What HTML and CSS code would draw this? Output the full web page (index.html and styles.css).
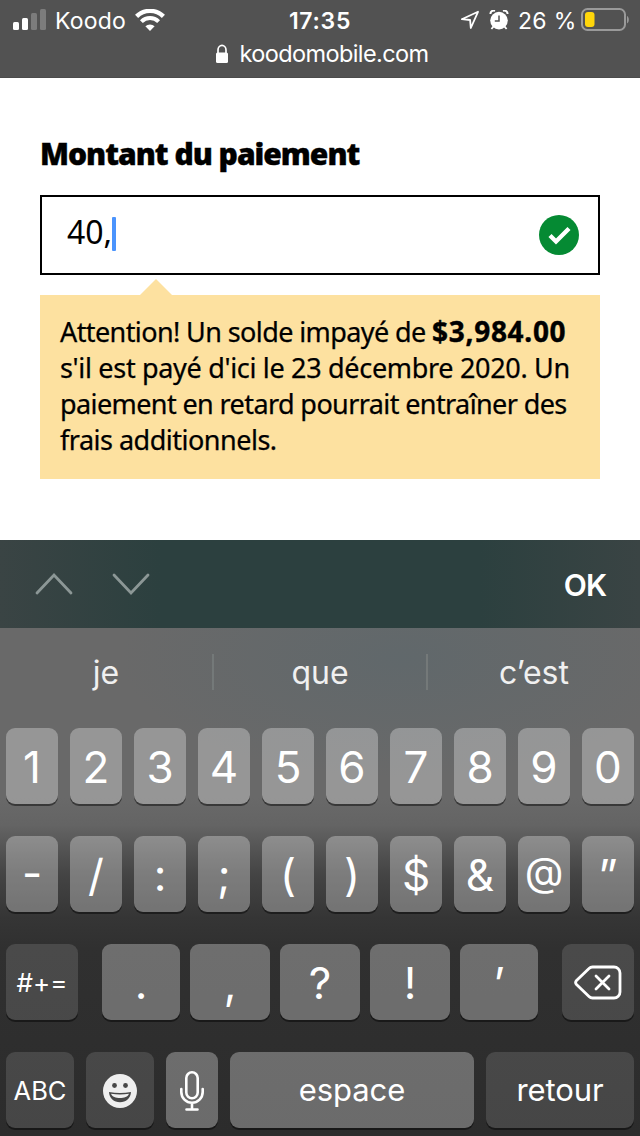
FILE: index.html
```html
<!DOCTYPE html>
<html lang="fr-CA">
<head>
    <meta charset="UTF-8">
    <meta name="viewport" content="width=device-width, initial-scale=1.0">
    <title>Montant du paiement</title>
    <link rel="stylesheet" href="styles.css">
</head>
<body>
    <header class="browser-bar">
        <div class="status">
            <div class="status-left">
                <svg class="signal" width="34" height="22" viewBox="0 0 34 22">
                    <rect x="0" y="13" width="6" height="8" rx="1.5" fill="#fff"/>
                    <rect x="9" y="9" width="6" height="12" rx="1.5" fill="#fff"/>
                    <rect x="18" y="4" width="6" height="17" rx="1.5" fill="#7c7c7c"/>
                    <rect x="27" y="0" width="6" height="21" rx="1.5" fill="#7c7c7c"/>
                </svg>
                <span class="carrier">Koodo</span>
                <svg class="wifi" width="30" height="22" viewBox="0 0 30 22">
                    <path d="M1.6 7.4a19 19 0 0 1 26.8 0" fill="none" stroke="#fff" stroke-width="4.4"/>
                    <path d="M6.4 12.6a12.2 12.2 0 0 1 17.2 0" fill="none" stroke="#fff" stroke-width="4"/>
                    <path d="M15 22l-4.6-4.8a6.8 6.8 0 0 1 9.2 0z" fill="#fff"/>
                </svg>
            </div>
            <div class="clock">17:35</div>
            <div class="status-right">
                <svg width="20" height="20" viewBox="0 0 20 20">
                    <path d="M1.8 9.2L18 1.8 10.8 18l-.7-8z" fill="none" stroke="#fff" stroke-width="1.8" stroke-linejoin="round"/>
                </svg>
                <svg class="alarm" width="20" height="20" viewBox="0 0 20 20">
                    <circle cx="10" cy="10.6" r="8.8" fill="#fff"/>
                    <path d="M1.5 4a3 3 0 0 1 4.4-3M18.5 4a3 3 0 0 0-4.4-3" fill="none" stroke="#fff" stroke-width="2"/>
                    <path d="M4.4 16.6l-2 2.4M15.6 16.6l2 2.4" stroke="#fff" stroke-width="1.8"/>
                    <path d="M10 5.6v5.4H5.8" fill="none" stroke="#525252" stroke-width="1.5"/>
                </svg>
                <span class="percent">26 %</span>
                <svg class="battery" width="50" height="24" viewBox="0 0 50 24">
                    <rect x="1" y="1" width="43" height="21" rx="5.5" fill="none" stroke="#9a9a9a" stroke-width="2"/>
                    <rect x="4" y="4" width="9.5" height="15" rx="3" fill="#ffd60a"/>
                    <path d="M46 8c2.4 1 2.4 6.4 0 7.4z" fill="#9a9a9a"/>
                </svg>
            </div>
        </div>
        <div class="address">
            <svg width="14" height="20" viewBox="0 0 14 20">
                <rect x="1" y="8.5" width="12" height="10.5" rx="1.5" fill="#fff"/>
                <path d="M3 9V6a4 4.6 0 0 1 8 0v3" fill="none" stroke="#fff" stroke-width="1.7"/>
            </svg>
            <span>koodomobile.com</span>
        </div>
    </header>

    <main class="payment">
        <h1>Montant du paiement</h1>
        <div class="amount">
            <span class="amount-value">40,</span><span class="caret"></span>
            <svg class="valid" width="40" height="40" viewBox="0 0 40 40">
                <circle cx="20" cy="20" r="20" fill="#058a33"/>
                <path d="M11 20.5l6 6 13-13" fill="none" stroke="#fff" stroke-width="4.4"/>
            </svg>
        </div>
        <div class="notice">
            <p class="line-1">Attention! Un solde impayé de <strong>$3,984.00</strong></p>
            <p class="line-2">s'il est payé d'ici le 23 décembre 2020. Un</p>
            <p class="line-3">paiement en retard pourrait entraîner des</p>
            <p class="line-4">frais additionnels.</p>
        </div>
    </main>

    <nav class="accessory">
        <svg width="38" height="24" viewBox="0 0 38 24">
            <path d="M2 21L19 3l17 18" fill="none" stroke="#8c9796" stroke-width="2.8" stroke-linecap="round"/>
        </svg>
        <svg width="38" height="24" viewBox="0 0 38 24">
            <path d="M2 3l17 18L36 3" fill="none" stroke="#8c9796" stroke-width="2.8" stroke-linecap="round"/>
        </svg>
        <span class="ok">OK</span>
    </nav>

    <section class="keyboard">
        <div class="suggestions">
            <span>je</span>
            <span>que</span>
            <span>c’est</span>
        </div>
        <div class="row ten">
            <div class="key">1</div>
            <div class="key">2</div>
            <div class="key">3</div>
            <div class="key">4</div>
            <div class="key">5</div>
            <div class="key">6</div>
            <div class="key">7</div>
            <div class="key">8</div>
            <div class="key">9</div>
            <div class="key">0</div>
        </div>
        <div class="row ten">
            <div class="key raised">-</div>
            <div class="key">/</div>
            <div class="key">:</div>
            <div class="key">;</div>
            <div class="key">(</div>
            <div class="key">)</div>
            <div class="key">$</div>
            <div class="key">&amp;</div>
            <div class="key at">@</div>
            <div class="key">”</div>
        </div>
        <div class="row punctuation">
            <div class="key dark symbols">#+=</div>
            <div class="key">.</div>
            <div class="key">,</div>
            <div class="key">?</div>
            <div class="key">!</div>
            <div class="key">’</div>
            <div class="key dark">
                <svg width="48" height="36" viewBox="0 0 48 36">
                    <path d="M19 2h21a6 6 0 0 1 6 6v19a6 6 0 0 1-6 6H19a5 5 0 0 1-4-1.5L2.5 19.5a3 3 0 0 1 0-4L15 3.5A5 5 0 0 1 19 2z" fill="none" stroke="#fff" stroke-width="2.8" stroke-linejoin="round"/>
                    <path d="M22 11l13 13M35 11L22 24" stroke="#fff" stroke-width="2.8" stroke-linecap="round"/>
                </svg>
            </div>
        </div>
        <div class="row bottom">
            <div class="key dark abc">ABC</div>
            <div class="key dark">
                <svg width="34" height="34" viewBox="0 0 34 34">
                    <circle cx="17" cy="17" r="17" fill="#efefef"/>
                    <circle cx="11.5" cy="11.5" r="2.4" fill="#474747"/>
                    <circle cx="22.5" cy="11.5" r="2.4" fill="#474747"/>
                    <path d="M6 18c7 1.3 15 1.3 22 0-.3 6.5-5 10.3-11 10.3S6.3 24.5 6 18z" fill="#474747"/>
                    <path d="M8 19.7c6 1 12 1 18 0-1 3.2-5 4.3-9 4.3s-8-1.1-9-4.3z" fill="#efefef"/>
                </svg>
            </div>
            <div class="key">
                <svg width="26" height="42" viewBox="0 0 26 42">
                    <rect x="7.3" y="2.3" width="11.4" height="26" rx="5.7" fill="none" stroke="#fff" stroke-width="2.6"/>
                    <path d="M2.3 19v3a10.7 10.7 0 0 0 21.4 0v-3M13 33v6M7.5 39.5h11" fill="none" stroke="#fff" stroke-width="2.6" stroke-linecap="round"/>
                </svg>
            </div>
            <div class="key word">espace</div>
            <div class="key dark word">retour</div>
        </div>
    </section>
</body>
</html>
```
FILE: styles.css
```css
* {
    box-sizing: border-box;
    margin: 0;
    padding: 0;
}

body {
    width: 640px;
    height: 1136px;
    overflow: hidden;
    background: #fff;
    font-family: Inter, "Liberation Sans", sans-serif;
    color: #fff;
}

svg {
    display: block;
    flex: none;
}

/* Status bar and address */
.browser-bar {
    height: 78px;
    background: #525252;
    border-bottom: 1px solid #4b4b4b;
}

.status {
    height: 40px;
    display: grid;
    grid-template-columns: 1fr auto 1fr;
    align-items: center;
    font-size: 23px;
    line-height: 28px;
}

.status-left,
.status-right {
    display: flex;
    align-items: center;
}

.status-left {
    padding-left: 13px;
}

.carrier {
    margin-left: 8px;
    width: 72px;
    padding-top: 2px;
    letter-spacing: 0.2px;
}

.wifi {
    margin-left: 8px;
}

.clock {
    padding-top: 2px;
    font-weight: 600;
    letter-spacing: 0.7px;
}

.status-right {
    justify-content: flex-end;
    padding-right: 9px;
}

.alarm {
    margin-left: 9px;
}

.percent {
    margin-left: 9px;
    width: 58px;
    padding-top: 2px;
    letter-spacing: 0.3px;
    white-space: nowrap;
}

.battery {
    margin-left: 5px;
}

.address {
    display: flex;
    justify-content: center;
    align-items: center;
    gap: 10px;
    height: 27px;
    padding-left: 4px;
    font-size: 23.5px;
    letter-spacing: -0.6px;
}

/* Payment form */
.payment {
    height: 462px;
    padding: 57px 40px 0;
    color: #000;
    font-family: "Noto Sans", sans-serif;
}

h1 {
    height: 60px;
    font-size: 30px;
    line-height: 38px;
    font-weight: 900;
    letter-spacing: -1px;
    white-space: nowrap;
    -webkit-text-stroke: 0.4px #000;
}

.amount {
    display: flex;
    align-items: center;
    height: 80px;
    padding: 0 19px 0 25px;
    border: 2px solid #000;
}

.amount-value {
    font-size: 32px;
    line-height: 40px;
    padding-bottom: 6px;
    letter-spacing: -0.1px;
}

.caret {
    width: 4px;
    height: 34px;
    margin-bottom: 3px;
    border-radius: 1px;
    background: #4b94fd;
}

.valid {
    margin-left: auto;
}

.notice {
    position: relative;
    height: 184px;
    margin-top: 20px;
    padding: 18px 20px;
    background: #fde1a0;
    font-size: 27px;
    line-height: 36px;
    white-space: nowrap;
    -webkit-text-stroke: 0.25px #000;
}

.notice::before {
    content: "";
    position: absolute;
    left: 100px;
    top: -16px;
    border: 16px solid transparent;
    border-top: 0;
    border-bottom-color: #fde1a0;
}

.line-1,
.line-3 {
    letter-spacing: -0.6px;
}

.line-1 strong {
    font-size: 28px;
    font-weight: 700;
    letter-spacing: 0.7px;
    -webkit-text-stroke: 0.4px #000;
}

.line-2 {
    letter-spacing: -0.32px;
}

.line-4 {
    letter-spacing: -0.5px;
}

/* Form navigation above the keyboard */
.accessory {
    display: flex;
    align-items: center;
    gap: 39px;
    height: 88px;
    padding: 0 34px 0 35px;
    background: linear-gradient(90deg, #3a4444, #2c403f 25%, #2c403f 75%, #3a4444);
}

.ok {
    margin-left: auto;
    padding-top: 2px;
    font-size: 30px;
    font-weight: 600;
    letter-spacing: -1px;
}

/* Keyboard */
.keyboard {
    height: 508px;
    background:
        radial-gradient(ellipse 280px 120px at 400px 30px, rgba(88, 103, 109, 0.5), rgba(88, 103, 109, 0)),
        linear-gradient(#696969 170px, #646464 197px, #505050 227px, #444 247px, #353535 290px, #303030 320px, #2c2c2c);
}

.suggestions {
    display: grid;
    grid-template-columns: 212px 214px 214px;
    height: 100px;
    padding-top: 26px;
    font-size: 32px;
    line-height: 38px;
    text-align: center;
    color: #f0f0f0;
}

.suggestions span {
    height: 36px;
}

.suggestions span + span {
    border-left: 2px solid #747979;
}

.row {
    display: grid;
    grid-template-rows: 76px;
    gap: 12px;
    height: 76px;
    margin: 0 6px 32px;
}

.ten {
    grid-template-columns: repeat(10, 52px);
}

.punctuation {
    grid-template-columns: 86px 78px 80px 80px 80px 78px 86px;
    gap: 10px;
}

.punctuation .key:first-child {
    margin-right: 14px;
}

.punctuation .key:last-child {
    margin-left: 14px;
}

.bottom {
    grid-template-columns: 68px 68px 52px 244px 148px;
    margin-bottom: 0;
}

.key {
    display: flex;
    justify-content: center;
    align-items: center;
    padding-top: 2px;
    border-radius: 9px;
    background: rgba(255, 255, 255, 0.3);
    box-shadow: 0 2px 0 rgba(0, 0, 0, 0.45);
    font-size: 44px;
    line-height: 1;
}

.dark {
    background: rgba(255, 255, 255, 0.125);
}

.raised {
    padding: 0 0 3px;
}

.at {
    padding: 0 0 5px;
    font-size: 40px;
}

.symbols {
    font-size: 26px;
}

.abc {
    font-size: 25.5px;
}

.word {
    padding: 0 0 1px;
    font-size: 31px;
    letter-spacing: -0.1px;
}
```
